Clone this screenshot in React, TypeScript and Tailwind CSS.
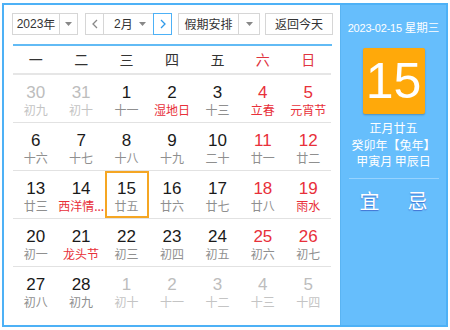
import React from "react";

type Cell = { d: number; l: string; other?: boolean; fest?: boolean };

const rows: Cell[][] = [
  [
    { d: 30, l: "初九", other: true },
    { d: 31, l: "初十", other: true },
    { d: 1, l: "十一" },
    { d: 2, l: "湿地日", fest: true },
    { d: 3, l: "十三" },
    { d: 4, l: "立春", fest: true },
    { d: 5, l: "元宵节", fest: true },
  ],
  [
    { d: 6, l: "十六" },
    { d: 7, l: "十七" },
    { d: 8, l: "十八" },
    { d: 9, l: "十九" },
    { d: 10, l: "二十" },
    { d: 11, l: "廿一" },
    { d: 12, l: "廿二" },
  ],
  [
    { d: 13, l: "廿三" },
    { d: 14, l: "西洋情...", fest: true },
    { d: 15, l: "廿五" },
    { d: 16, l: "廿六" },
    { d: 17, l: "廿七" },
    { d: 18, l: "廿八" },
    { d: 19, l: "雨水", fest: true },
  ],
  [
    { d: 20, l: "初一" },
    { d: 21, l: "龙头节", fest: true },
    { d: 22, l: "初三" },
    { d: 23, l: "初四" },
    { d: 24, l: "初五" },
    { d: 25, l: "初六" },
    { d: 26, l: "初七" },
  ],
  [
    { d: 27, l: "初八" },
    { d: 28, l: "初九" },
    { d: 1, l: "初十", other: true },
    { d: 2, l: "十一", other: true },
    { d: 3, l: "十二", other: true },
    { d: 4, l: "十三", other: true },
    { d: 5, l: "十四", other: true },
  ],
];

const weekdays = ["一", "二", "三", "四", "五", "六", "日"];

const Caret = () => (
  <svg width="7" height="4" viewBox="0 0 7 4">
    <path d="M0 0 L7 0 L3.5 4 Z" fill="#888" />
  </svg>
);

export default function App() {
  const cjk = { fontFamily: '"Noto Sans CJK SC", "Microsoft YaHei", sans-serif' };
  const num = { fontFamily: '"Liberation Sans", Arial, "Noto Sans CJK SC", sans-serif' };
  return (
    <div className="w-[450px] h-[330px] bg-white relative" style={cjk}>
      <div className="absolute left-[2px] top-[3px] w-[446px] h-[324px] border-2 border-[#4db1f6] flex bg-white">
        {/* left */}
        <div className="w-[336px] pl-[8px] pt-[8px] flex flex-col">
          <div className="flex h-[22px] text-[12px] text-[#333]">
            <div className="w-[66px] h-[22px] border border-[#d6d6d6] flex">
              <div className="w-[46px] flex items-center justify-center" style={num}>
                2023<span style={cjk}>年</span>
              </div>
              <div className="flex-1 border-l border-[#d6d6d6] flex items-center justify-center">
                <Caret />
              </div>
            </div>
            <div className="ml-[7px] flex h-[22px]">
              <div className="w-[19px] border border-[#d6d6d6] flex items-center justify-center">
                <svg width="6" height="10" viewBox="0 0 6 10">
                  <path d="M5 1 L1 5 L5 9" stroke="#888" strokeWidth="1.3" fill="none" />
                </svg>
              </div>
              <div className="w-[49px] border-y border-[#d6d6d6] flex items-center pl-[10px]">
                <span style={num}>2</span>月<span className="ml-auto mr-[7px] flex"><Caret /></span>
              </div>
              <div className="w-[19px] border border-[#4db1f6] flex items-center justify-center">
                <svg width="6" height="10" viewBox="0 0 6 10">
                  <path d="M1 1 L5 5 L1 9" stroke="#2f9ae8" strokeWidth="1.3" fill="none" />
                </svg>
              </div>
            </div>
            <div className="ml-[6px] w-[82px] h-[22px] border border-[#d6d6d6] flex">
              <div className="w-[59px] flex items-center justify-center">假期安排</div>
              <div className="flex-1 border-l border-[#d6d6d6] flex items-center justify-center">
                <Caret />
              </div>
            </div>
            <div className="ml-[5px] w-[68px] h-[22px] border border-[#d6d6d6] flex items-center justify-center">
              返回今天
            </div>
          </div>
          <div className="mt-[9px] ml-[1px] w-[319px] h-[2px] bg-[#62bbf5]" />
          <div className="ml-[1px] w-[318px] grid grid-cols-7 h-[29px] items-center text-[14px] border-b-2 border-[#e6e6e6]">
            {weekdays.map((w, i) => (
              <div key={w} className={`text-center ${i >= 5 ? "text-[#e0343f]" : "text-[#333]"}`}>
                {w}
              </div>
            ))}
          </div>
          <div className="ml-[1px] w-[318px] flex flex-col">
            {rows.map((r, ri) => (
              <div
                key={ri}
                className={`grid grid-cols-7 h-[48px] ${ri < 4 ? "border-b border-[#e2e2e2]" : ""}`}
              >
                {r.map((c, ci) => {
                  const weekend = ci >= 5;
                  const numColor = c.other ? "text-[#bdbdbd]" : weekend ? "text-[#e8303a]" : "text-[#1a1a1a]";
                  const lunColor = c.other
                    ? "text-[#c4c4c4]"
                    : c.fest
                    ? "text-[#e8303a]"
                    : "text-[#8f8f8f]";
                  const sel = !c.other && c.d === 15;
                  return (
                    <div key={ci} className="flex justify-center">
                      <div
                        className={`w-[44px] h-[47px] border-2 pt-[7px] flex flex-col items-center ${
                          sel ? "border-[#f5a623]" : "border-transparent"
                        }`}
                      >
                        <div className={`text-[17px] leading-[18px] ${numColor}`} style={num}>
                          {c.d}
                        </div>
                        <div className={`text-[12px] leading-[14px] mt-[1px] whitespace-nowrap ${lunColor}`}>
                          {c.l}
                        </div>
                      </div>
                    </div>
                  );
                })}
              </div>
            ))}
          </div>
        </div>
        {/* right */}
        <div className="flex-1 bg-[#66befc] border-l border-[#5ab4f2] flex flex-col items-center text-white">
          <div className="mt-[14px] text-[11px] leading-[16px] tracking-[-0.2px]" style={num}>
            2023-02-15 <span className="text-[11.5px] tracking-normal" style={cjk}>星期三</span>
          </div>
          <div
            className="mt-[12px] w-[62px] h-[66px] bg-[#ffa90a] rounded-[2px] flex items-center justify-center text-[50px] shadow-[0_1px_2px_rgba(0,0,0,0.25)]"
            style={num}
          >
            15
          </div>
          <div className="mt-[6px] text-[12px] leading-[16.5px] text-center">
            <div>正月廿五</div>
            <div>癸卯年【兔年】</div>
            <div>甲寅月 甲辰日</div>
          </div>
          <div className="mt-[8px] w-[90px] h-[1px] bg-[#96d3ff]" />
          <div
            className="mt-[10px] flex gap-[28px] text-[20px] leading-[24px]"
            style={{ textShadow: "0 1px 1px rgba(40,60,180,0.6)" }}
          >
            <span>宜</span>
            <span>忌</span>
          </div>
        </div>
      </div>
    </div>
  );
}
